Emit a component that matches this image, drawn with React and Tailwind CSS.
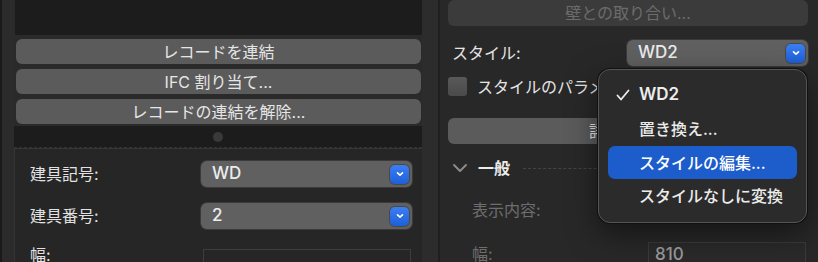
import React from 'react';

const font = { fontFamily: 'Inter, "Noto Sans CJK JP", sans-serif' };

function BlueArrow() {
  return (
    <div className="flex h-[19px] w-[19px] shrink-0 items-center justify-center rounded-[5px] bg-gradient-to-b from-[#3b7ff2] to-[#1d5fd8] shadow-[0_0_0_1px_rgba(0,0,0,0.25)]">
      <svg width="8" height="6" viewBox="0 0 8 6">
        <polyline points="1.5,1.8 4,4.2 6.5,1.8" fill="none" stroke="#fff" strokeWidth="1.6" strokeLinecap="round" strokeLinejoin="round" />
      </svg>
    </div>
  );
}

function Select({ value, className = '' }) {
  return (
    <div className={`flex h-[26px] shrink-0 items-center justify-between rounded-[6px] bg-[#606060] pl-[11px] pr-[3px] shadow-[0_0_0_1px_#3a3a3a] ${className}`}>
      <span className="text-[17px] font-medium text-[#ececec]">{value}</span>
      <BlueArrow />
    </div>
  );
}

function LeftButton({ children }) {
  return (
    <div className="flex h-[25px] shrink-0 items-center justify-center rounded-[6px] bg-[#5b5b5b] text-[16px] text-[#e6e6e6]">
      {children}
    </div>
  );
}

export default function App() {
  return (
    <div className="relative flex h-[262px] w-[818px] overflow-hidden bg-[#1a1a1a]" style={font}>
      {/* left column */}
      <div className="flex w-[440px] shrink-0">
        <div className="w-[2px] bg-[#1a1a1a]" />
        <div className="w-[12px] bg-[#2b2b2b]" />
        <div className="flex w-[408px] flex-col bg-[#2a2a2a]">
          <div className="ml-[1px] h-[35px] shrink-0 bg-[#1c1c1c]" />
          <div className="flex shrink-0 flex-col gap-[5px] pl-[2px] pr-[1px] pt-[4px]">
            <LeftButton>レコードを連結</LeftButton>
            <LeftButton>IFC 割り当て...</LeftButton>
            <LeftButton>レコードの連結を解除...</LeftButton>
          </div>
          <div className="mt-[2px] flex h-[22px] shrink-0 items-center border-b border-dashed border-[#333] bg-[#1c1c1c] pl-[199px]">
            <div className="h-[10px] w-[10px] rounded-full bg-[#3a3a3a]" />
          </div>
          <div className="flex-1 shrink-0 border-l border-t border-[#353535] bg-[#262626] pl-[15px] pt-[12px]">
            <div className="flex h-[26px] items-center">
              <span className="w-[171px] text-[16px] text-[#e2e2e2]">建具記号:</span>
              <Select value="WD" className="w-[211px]" />
            </div>
            <div className="mt-[16px] flex h-[26px] items-center">
              <span className="w-[171px] text-[16px] text-[#e2e2e2]">建具番号:</span>
              <Select value="2" className="w-[211px]" />
            </div>
            <div className="mt-[20px] flex items-start">
              <span className="w-[173px] text-[16px] leading-[12px] text-[#e2e2e2]">幅:</span>
              <div className="h-[26px] w-[208px] border border-[#3d3d3d] bg-[#262626]" />
            </div>
          </div>
        </div>
        <div className="w-[16px] bg-[#2c2c2c]" />
        <div className="w-[2px] bg-[#1f1f1f]" />
      </div>

      {/* right column */}
      <div className="flex flex-1 flex-col bg-[#282828] pl-[8px] pr-[10px]">
        <div className="flex h-[26px] shrink-0 items-center justify-center rounded-[6px] bg-[#3b3b3b] text-[16px] text-[#6c6c6c]">
          壁との取り合い...
        </div>
        <div className="mt-[14px] flex h-[26px] shrink-0 items-center">
          <span className="pl-[4px] text-[16px] text-[#e4e4e4]">スタイル:</span>
          <Select value="WD2" className="ml-auto w-[181px]" />
        </div>
        <div className="mt-[11px] flex h-[19px] shrink-0 items-center">
          <div className="h-[19px] w-[19px] shrink-0 rounded-[3px] bg-gradient-to-b from-[#595959] to-[#4a4a4a]" />
          <span className="ml-[10px] whitespace-nowrap text-[16px] text-[#e4e4e4]">スタイルのパラメ</span>
        </div>
        <div className="mt-[22px] flex h-[26px] shrink-0 items-center justify-center rounded-[6px] bg-[#5b5b5b] text-[16px] text-[#e6e6e6]">
          詳細設定...
        </div>
        <div className="mt-[14px] flex h-[20px] shrink-0 items-center pl-[4px]">
          <svg width="16" height="10" viewBox="0 0 16 10">
            <polyline points="2,2 8,8 14,2" fill="none" stroke="#8a8a8a" strokeWidth="2" strokeLinecap="round" strokeLinejoin="round" />
          </svg>
          <span className="ml-[10px] text-[16px] font-bold text-[#ededed]">一般</span>
          <div className="ml-[13px] flex-1 border-t border-dashed border-[#444]" />
        </div>
        <div className="mt-[22px] flex h-[20px] shrink-0 items-center pl-[24px] text-[16px] text-[#6e6e6e]">表示内容:</div>
        <div className="mt-[22px] flex shrink-0 items-start">
          <span className="w-[200px] pl-[24px] pt-[0px] text-[16px] text-[#6e6e6e]">幅:</span>
          <div className="h-[26px] w-[158px] border border-[#3a3a3a] bg-[#2a2a2a] pl-[6px] text-[17px] font-medium leading-[22px] text-[#9a9a9a]">810</div>
        </div>
      </div>

      {/* popup menu */}
      <div className="absolute left-[598px] top-[69px] h-[154px] w-[209px] rounded-[12px] border border-[#555] bg-[#2b2b2b] px-[9px] py-[8px] shadow-[0_0_0_1px_#111,0_10px_30px_rgba(0,0,0,0.5)]">
        <div className="flex h-[34px] items-center text-[16px] font-semibold text-[#ececec]">
          <span className="flex w-[31px] justify-start pl-[8px]">
            <svg width="14" height="12" viewBox="0 0 14 12">
              <polyline points="1.5,6.5 5,10.5 12.5,1.5" fill="none" stroke="#ececec" strokeWidth="1.8" strokeLinecap="round" strokeLinejoin="round" />
            </svg>
          </span>
          <span className="text-[17px]">WD2</span>
        </div>
        <div className="flex h-[34px] items-center pl-[31px] text-[16px] font-medium text-[#ececec]">置き換え...</div>
        <div className="flex h-[33px] items-center rounded-[7px] bg-[#1c5ccb] pl-[31px] text-[16px] font-medium text-white">スタイルの編集...</div>
        <div className="flex h-[34px] items-center pl-[31px] text-[16px] font-medium text-[#ececec]">スタイルなしに変換</div>
      </div>
    </div>
  );
}
